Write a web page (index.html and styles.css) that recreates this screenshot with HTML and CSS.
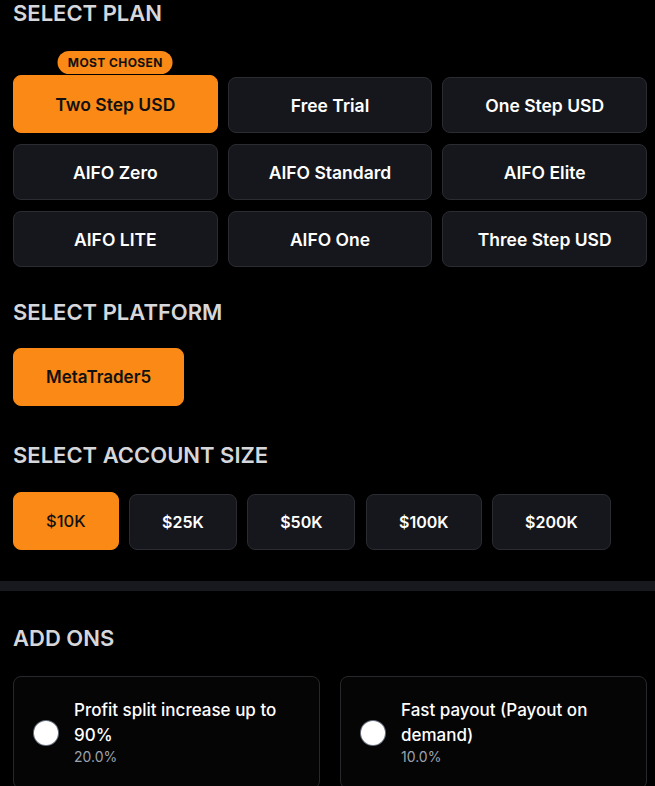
FILE: index.html
```html
<!DOCTYPE html>
<html lang="en">
<head>
<meta charset="utf-8">
<title>Select Plan</title>
<link rel="stylesheet" href="styles.css">
</head>
<body>
<main class="page">
  <h2 class="title title-plan">SELECT PLAN</h2>
  <div class="plan-grid">
    <button class="opt opt-active">Two Step USD<span class="badge">MOST CHOSEN</span></button>
    <button class="opt">Free Trial</button>
    <button class="opt">One Step USD</button>
    <button class="opt">AIFO Zero</button>
    <button class="opt">AIFO Standard</button>
    <button class="opt">AIFO Elite</button>
    <button class="opt">AIFO LITE</button>
    <button class="opt">AIFO One</button>
    <button class="opt">Three Step USD</button>
  </div>

  <h2 class="title title-platform">SELECT PLATFORM</h2>
  <div class="row row-platform">
    <button class="opt opt-pad opt-active">MetaTrader5</button>
  </div>

  <h2 class="title title-size">SELECT ACCOUNT SIZE</h2>
  <div class="row row-size">
    <button class="opt opt-pad opt-active">$10K</button>
    <button class="opt opt-pad">$25K</button>
    <button class="opt opt-pad">$50K</button>
    <button class="opt opt-pad">$100K</button>
    <button class="opt opt-pad">$200K</button>
  </div>

  <div class="divider"></div>

  <h2 class="title title-addons">ADD ONS</h2>
  <div class="addons">
    <label class="addon">
      <span class="radio"></span>
      <span class="addon-text">
        <span class="addon-name">Profit split increase up to 90%</span>
        <span class="addon-pct">20.0%</span>
      </span>
    </label>
    <label class="addon">
      <span class="radio"></span>
      <span class="addon-text">
        <span class="addon-name">Fast payout (Payout on demand)</span>
        <span class="addon-pct">10.0%</span>
      </span>
    </label>
  </div>
</main>
</body>
</html>
```

FILE: styles.css
```css
html, body {
  margin: 0;
  padding: 0;
  background: #000;
}
body {
  font-family: Inter, "Noto Sans", Arial, sans-serif;
  color: #fff;
  overflow: hidden;
}
.page {
  padding: 0 8px 0 13px;
}
.title {
  margin: 0;
  font-size: 22px;
  line-height: 28px;
  font-weight: 600;
  color: #d6d7db;
}
.title-plan {
  margin-top: -1px;
}
.plan-grid {
  margin-top: 50px;
  display: grid;
  grid-template-columns: repeat(3, 1fr);
  grid-auto-rows: 56px;
  column-gap: 10px;
  row-gap: 11px;
}
.opt {
  position: relative;
  box-sizing: border-box;
  font-family: inherit;
  font-size: 17.5px;
  font-weight: 600;
  color: #fff;
  background: #16171c;
  border: 1px solid #2b2c31;
  border-radius: 8px;
  margin: 0;
  padding: 0;
  height: 56px;
  cursor: pointer;
}
.plan-grid .opt {
  height: auto;
}
.opt-active {
  background: #fa8916;
  border-color: #fa8916;
  color: #111;
  margin-top: -2px;
}
.row .opt-active {
  height: 58px;
}
.badge {
  position: absolute;
  top: -25px;
  left: 50%;
  transform: translateX(-50%);
  height: 23px;
  line-height: 23px;
  padding: 0 10px;
  border-radius: 999px;
  background: #fa8916;
  color: #111;
  font-size: 12px;
  font-weight: 700;
  letter-spacing: 0.4px;
  white-space: nowrap;
}
.title-platform {
  margin-top: 31px;
}
.row {
  display: flex;
  align-items: flex-end;
  gap: 10.5px;
}
.row-platform {
  margin-top: 24px;
}
.opt-pad {
  padding: 0 32px;
  font-size: 17px;
}
.title-size {
  margin-top: 35px;
}
.row-size {
  margin-top: 25px;
}
.row-size .opt {
  font-size: 16px;
}
.row-size .opt-active {
  font-size: 16.5px;
  font-weight: 500;
}
.divider {
  margin: 31px -8px 0 -13px;
  height: 10px;
  background: #18191e;
}
.title-addons {
  margin-top: 33px;
}
.addons {
  margin-top: 24px;
  display: grid;
  grid-template-columns: 1fr 1fr;
  gap: 20px;
}
.addon {
  display: flex;
  align-items: center;
  gap: 16px;
  padding: 21px 20px;
  background: #050505;
  border: 1px solid #27282c;
  border-radius: 8px;
}
.radio {
  flex: none;
  width: 24px;
  height: 24px;
  border-radius: 50%;
  background: #fff;
  box-shadow: 0 0 0 1px #6b7280;
}
.addon-text {
  display: flex;
  flex-direction: column;
}
.addon-name {
  font-size: 17px;
  line-height: 24.5px;
  font-weight: 500;
  color: #fff;
}
.addon-pct {
  font-size: 14px;
  line-height: 20px;
  color: #9ca3af;
}
```
